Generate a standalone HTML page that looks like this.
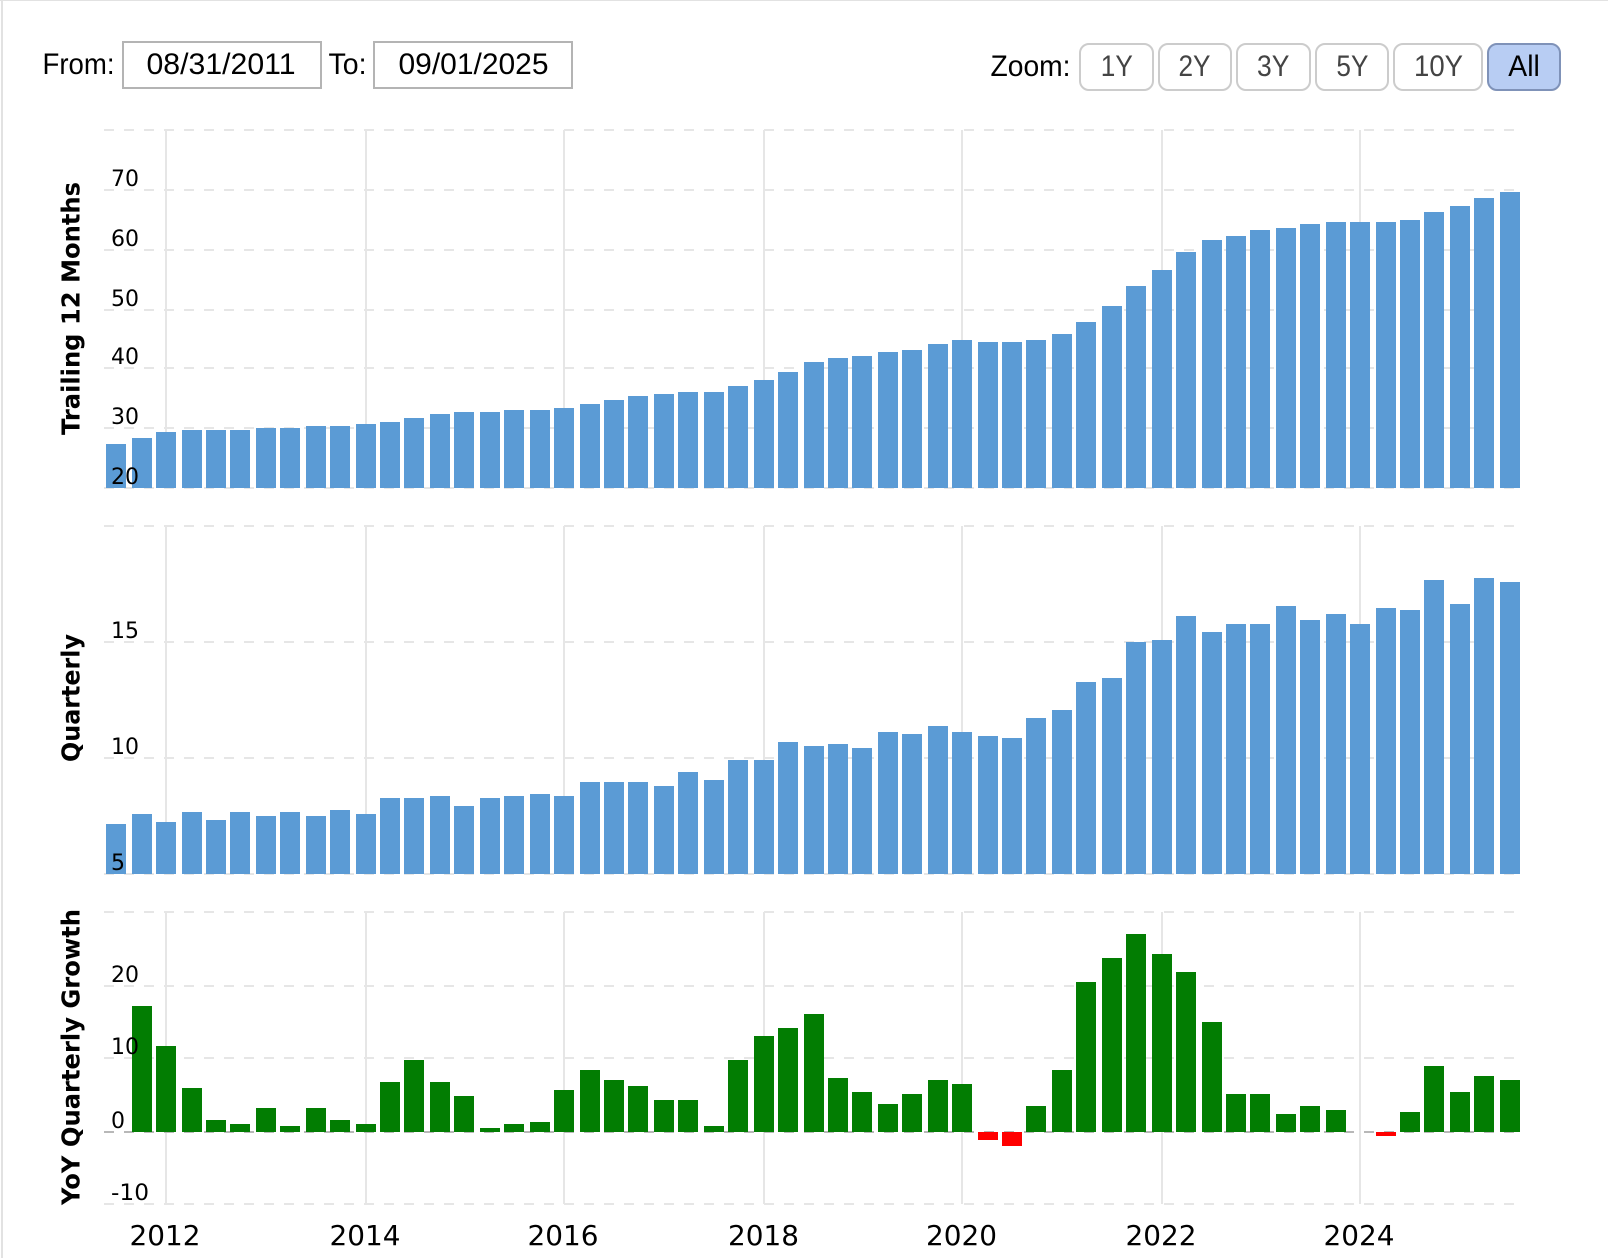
<!DOCTYPE html>
<html lang="en">
<head>
<meta charset="utf-8">
<title>Revenue Chart</title>
<style>
html,body{margin:0;padding:0;background:#fff;width:1608px;height:1258px;overflow:hidden}
svg{display:block}
.ui{font-family:"Liberation Sans",Arial,sans-serif;font-size:30px;fill:#000}
.btn{font-family:"Liberation Sans",Arial,sans-serif;font-size:30px;fill:#444}
.yl{font-family:"DejaVu Sans",Verdana,sans-serif;font-size:22px;fill:#000}
.xl{font-family:"DejaVu Sans",Verdana,sans-serif;font-size:28px;fill:#000}
.tt{font-family:"DejaVu Sans",Verdana,sans-serif;font-size:25px;font-weight:700;fill:#000}
.h{stroke:#e6e6e6;stroke-width:2;stroke-dasharray:10 10;fill:none}
.v{stroke:#e6e6e6;stroke-width:2;fill:none}
</style>
</head>
<body>
<svg width="1608" height="1258" viewBox="0 0 1608 1258" xmlns="http://www.w3.org/2000/svg">
<rect x="0" y="0" width="1608" height="1258" fill="#fff"/>
<rect x="0" y="0" width="1608" height="1" fill="#e2e2e2"/>
<rect x="1" y="0" width="2" height="1258" fill="#e2e2e2"/>

<!-- date range -->
<text class="ui" x="42.5" y="74" textLength="72" lengthAdjust="spacingAndGlyphs">From:</text>
<rect x="123" y="42" width="198" height="46" fill="#fff" stroke="#b4b4b4" stroke-width="2"/>
<text class="ui" x="146.5" y="74" textLength="149" lengthAdjust="spacingAndGlyphs">08/31/2011</text>
<text class="ui" x="328.5" y="74" textLength="38" lengthAdjust="spacingAndGlyphs">To:</text>
<rect x="374" y="42" width="198" height="46" fill="#fff" stroke="#b4b4b4" stroke-width="2"/>
<text class="ui" x="398.5" y="74" textLength="150" lengthAdjust="spacingAndGlyphs">09/01/2025</text>

<!-- zoom buttons -->
<text class="ui" x="990.5" y="76" textLength="80" lengthAdjust="spacingAndGlyphs">Zoom:</text>
<rect x="1080" y="44" width="73" height="46" rx="9" fill="#fff" stroke="#cccccc" stroke-width="2"/>
<text class="btn" x="1100.8" y="76" textLength="32" lengthAdjust="spacingAndGlyphs">1Y</text>
<rect x="1159" y="44" width="72" height="46" rx="9" fill="#fff" stroke="#cccccc" stroke-width="2"/>
<text class="btn" x="1178.5" y="76" textLength="32" lengthAdjust="spacingAndGlyphs">2Y</text>
<rect x="1237" y="44" width="73" height="46" rx="9" fill="#fff" stroke="#cccccc" stroke-width="2"/>
<text class="btn" x="1257" y="76" textLength="32.4" lengthAdjust="spacingAndGlyphs">3Y</text>
<rect x="1316" y="44" width="72" height="46" rx="9" fill="#fff" stroke="#cccccc" stroke-width="2"/>
<text class="btn" x="1336.4" y="76" textLength="32" lengthAdjust="spacingAndGlyphs">5Y</text>
<rect x="1394" y="44" width="88" height="46" rx="9" fill="#fff" stroke="#cccccc" stroke-width="2"/>
<text class="btn" x="1414" y="76" textLength="49" lengthAdjust="spacingAndGlyphs">10Y</text>
<rect x="1488" y="44" width="72" height="46" rx="9" fill="#b8cdf3" stroke="#7f92b8" stroke-width="2"/>
<text class="ui" x="1508.3" y="76" textLength="31.5" lengthAdjust="spacingAndGlyphs">All</text>

<!-- vertical grid -->
<path class="v" d="M166 130V488M366 130V488M564 130V488M764 130V488M962 130V488M1162 130V488M1360 130V488"/>
<path class="v" d="M166 526V874M366 526V874M564 526V874M764 526V874M962 526V874M1162 526V874M1360 526V874"/>
<path class="v" d="M166 912V1204M366 912V1204M564 912V1204M764 912V1204M962 912V1204M1162 912V1204M1360 912V1204"/>

<!-- horizontal grid -->
<path class="h" d="M104 130H1514M104 190H1514M104 250H1514M104 310H1514M104 368H1514M104 428H1514M104 488H1514"/>
<path class="h" d="M104 526H1514M104 642H1514M104 758H1514M104 874H1514"/>
<path class="h" d="M104 912H1514M104 986H1514M104 1058H1514M104 1204H1514"/>
<path class="h" style="stroke:#b8b8b8" d="M104 1132H1514"/>

<!-- chart 1 bars -->
<path fill="#5b9bd5" d="M106 444h20V488h-20zM132 438h20V488h-20zM156 432h20V488h-20zM182 430h20V488h-20zM206 430h20V488h-20zM230 430h20V488h-20zM256 428h20V488h-20zM280 428h20V488h-20zM306 426h20V488h-20zM330 426h20V488h-20zM356 424h20V488h-20zM380 422h20V488h-20zM404 418h20V488h-20zM430 414h20V488h-20zM454 412h20V488h-20zM480 412h20V488h-20zM504 410h20V488h-20zM530 410h20V488h-20zM554 408h20V488h-20zM580 404h20V488h-20zM604 400h20V488h-20zM628 396h20V488h-20zM654 394h20V488h-20zM678 392h20V488h-20zM704 392h20V488h-20zM728 386h20V488h-20zM754 380h20V488h-20zM778 372h20V488h-20zM804 362h20V488h-20zM828 358h20V488h-20zM852 356h20V488h-20zM878 352h20V488h-20zM902 350h20V488h-20zM928 344h20V488h-20zM952 340h20V488h-20zM978 342h20V488h-20zM1002 342h20V488h-20zM1026 340h20V488h-20zM1052 334h20V488h-20zM1076 322h20V488h-20zM1102 306h20V488h-20zM1126 286h20V488h-20zM1152 270h20V488h-20zM1176 252h20V488h-20zM1202 240h20V488h-20zM1226 236h20V488h-20zM1250 230h20V488h-20zM1276 228h20V488h-20zM1300 224h20V488h-20zM1326 222h20V488h-20zM1350 222h20V488h-20zM1376 222h20V488h-20zM1400 220h20V488h-20zM1424 212h20V488h-20zM1450 206h20V488h-20zM1474 198h20V488h-20zM1500 192h20V488h-20z"/>

<!-- chart 2 bars -->
<path fill="#5b9bd5" d="M106 824h20V874h-20zM132 814h20V874h-20zM156 822h20V874h-20zM182 812h20V874h-20zM206 820h20V874h-20zM230 812h20V874h-20zM256 816h20V874h-20zM280 812h20V874h-20zM306 816h20V874h-20zM330 810h20V874h-20zM356 814h20V874h-20zM380 798h20V874h-20zM404 798h20V874h-20zM430 796h20V874h-20zM454 806h20V874h-20zM480 798h20V874h-20zM504 796h20V874h-20zM530 794h20V874h-20zM554 796h20V874h-20zM580 782h20V874h-20zM604 782h20V874h-20zM628 782h20V874h-20zM654 786h20V874h-20zM678 772h20V874h-20zM704 780h20V874h-20zM728 760h20V874h-20zM754 760h20V874h-20zM778 742h20V874h-20zM804 746h20V874h-20zM828 744h20V874h-20zM852 748h20V874h-20zM878 732h20V874h-20zM902 734h20V874h-20zM928 726h20V874h-20zM952 732h20V874h-20zM978 736h20V874h-20zM1002 738h20V874h-20zM1026 718h20V874h-20zM1052 710h20V874h-20zM1076 682h20V874h-20zM1102 678h20V874h-20zM1126 642h20V874h-20zM1152 640h20V874h-20zM1176 616h20V874h-20zM1202 632h20V874h-20zM1226 624h20V874h-20zM1250 624h20V874h-20zM1276 606h20V874h-20zM1300 620h20V874h-20zM1326 614h20V874h-20zM1350 624h20V874h-20zM1376 608h20V874h-20zM1400 610h20V874h-20zM1424 580h20V874h-20zM1450 604h20V874h-20zM1474 578h20V874h-20zM1500 582h20V874h-20z"/>

<!-- chart 3 bars -->
<path fill="#027d02" d="M132 1006h20V1132h-20zM156 1046h20V1132h-20zM182 1088h20V1132h-20zM206 1120h20V1132h-20zM230 1124h20V1132h-20zM256 1108h20V1132h-20zM280 1126h20V1132h-20zM306 1108h20V1132h-20zM330 1120h20V1132h-20zM356 1124h20V1132h-20zM380 1082h20V1132h-20zM404 1060h20V1132h-20zM430 1082h20V1132h-20zM454 1096h20V1132h-20zM480 1128h20V1132h-20zM504 1124h20V1132h-20zM530 1122h20V1132h-20zM554 1090h20V1132h-20zM580 1070h20V1132h-20zM604 1080h20V1132h-20zM628 1086h20V1132h-20zM654 1100h20V1132h-20zM678 1100h20V1132h-20zM704 1126h20V1132h-20zM728 1060h20V1132h-20zM754 1036h20V1132h-20zM778 1028h20V1132h-20zM804 1014h20V1132h-20zM828 1078h20V1132h-20zM852 1092h20V1132h-20zM878 1104h20V1132h-20zM902 1094h20V1132h-20zM928 1080h20V1132h-20zM952 1084h20V1132h-20zM1026 1106h20V1132h-20zM1052 1070h20V1132h-20zM1076 982h20V1132h-20zM1102 958h20V1132h-20zM1126 934h20V1132h-20zM1152 954h20V1132h-20zM1176 972h20V1132h-20zM1202 1022h20V1132h-20zM1226 1094h20V1132h-20zM1250 1094h20V1132h-20zM1276 1114h20V1132h-20zM1300 1106h20V1132h-20zM1326 1110h20V1132h-20zM1400 1112h20V1132h-20zM1424 1066h20V1132h-20zM1450 1092h20V1132h-20zM1474 1076h20V1132h-20zM1500 1080h20V1132h-20z"/>
<path fill="#ff0000" d="M978 1132h20V1140h-20zM1002 1132h20V1146h-20zM1376 1132h20V1136h-20z"/>

<!-- y labels -->
<text class="yl" x="111" y="186" textLength="28" lengthAdjust="spacingAndGlyphs">70</text>
<text class="yl" x="111" y="246" textLength="28" lengthAdjust="spacingAndGlyphs">60</text>
<text class="yl" x="111" y="306" textLength="28" lengthAdjust="spacingAndGlyphs">50</text>
<text class="yl" x="111" y="364" textLength="28" lengthAdjust="spacingAndGlyphs">40</text>
<text class="yl" x="111" y="424" textLength="28" lengthAdjust="spacingAndGlyphs">30</text>
<text class="yl" x="111" y="484" textLength="28" lengthAdjust="spacingAndGlyphs">20</text>
<text class="yl" x="111" y="638" textLength="28" lengthAdjust="spacingAndGlyphs">15</text>
<text class="yl" x="111" y="754" textLength="28" lengthAdjust="spacingAndGlyphs">10</text>
<text class="yl" x="111" y="870" textLength="14" lengthAdjust="spacingAndGlyphs">5</text>
<text class="yl" x="111" y="982" textLength="28" lengthAdjust="spacingAndGlyphs">20</text>
<text class="yl" x="111" y="1054" textLength="28" lengthAdjust="spacingAndGlyphs">10</text>
<text class="yl" x="111" y="1128" textLength="14" lengthAdjust="spacingAndGlyphs">0</text>
<text class="yl" x="111" y="1200" textLength="38" lengthAdjust="spacingAndGlyphs">-10</text>

<!-- axis titles -->
<text class="tt" x="79.5" y="435" transform="rotate(-90 79.5 435)" textLength="253" lengthAdjust="spacingAndGlyphs">Trailing 12 Months</text>
<text class="tt" x="79.5" y="762" transform="rotate(-90 79.5 762)" textLength="128" lengthAdjust="spacingAndGlyphs">Quarterly</text>
<text class="tt" x="79.5" y="1205" transform="rotate(-90 79.5 1205)" textLength="296" lengthAdjust="spacingAndGlyphs">YoY Quarterly Growth</text>

<!-- x labels -->
<text class="xl" x="129.5" y="1245" textLength="71" lengthAdjust="spacingAndGlyphs">2012</text>
<text class="xl" x="329.5" y="1245" textLength="71" lengthAdjust="spacingAndGlyphs">2014</text>
<text class="xl" x="527.5" y="1245" textLength="71" lengthAdjust="spacingAndGlyphs">2016</text>
<text class="xl" x="728" y="1245" textLength="71" lengthAdjust="spacingAndGlyphs">2018</text>
<text class="xl" x="926" y="1245" textLength="71" lengthAdjust="spacingAndGlyphs">2020</text>
<text class="xl" x="1125.5" y="1245" textLength="71" lengthAdjust="spacingAndGlyphs">2022</text>
<text class="xl" x="1323.5" y="1245" textLength="71" lengthAdjust="spacingAndGlyphs">2024</text>
</svg>
</body>
</html>
